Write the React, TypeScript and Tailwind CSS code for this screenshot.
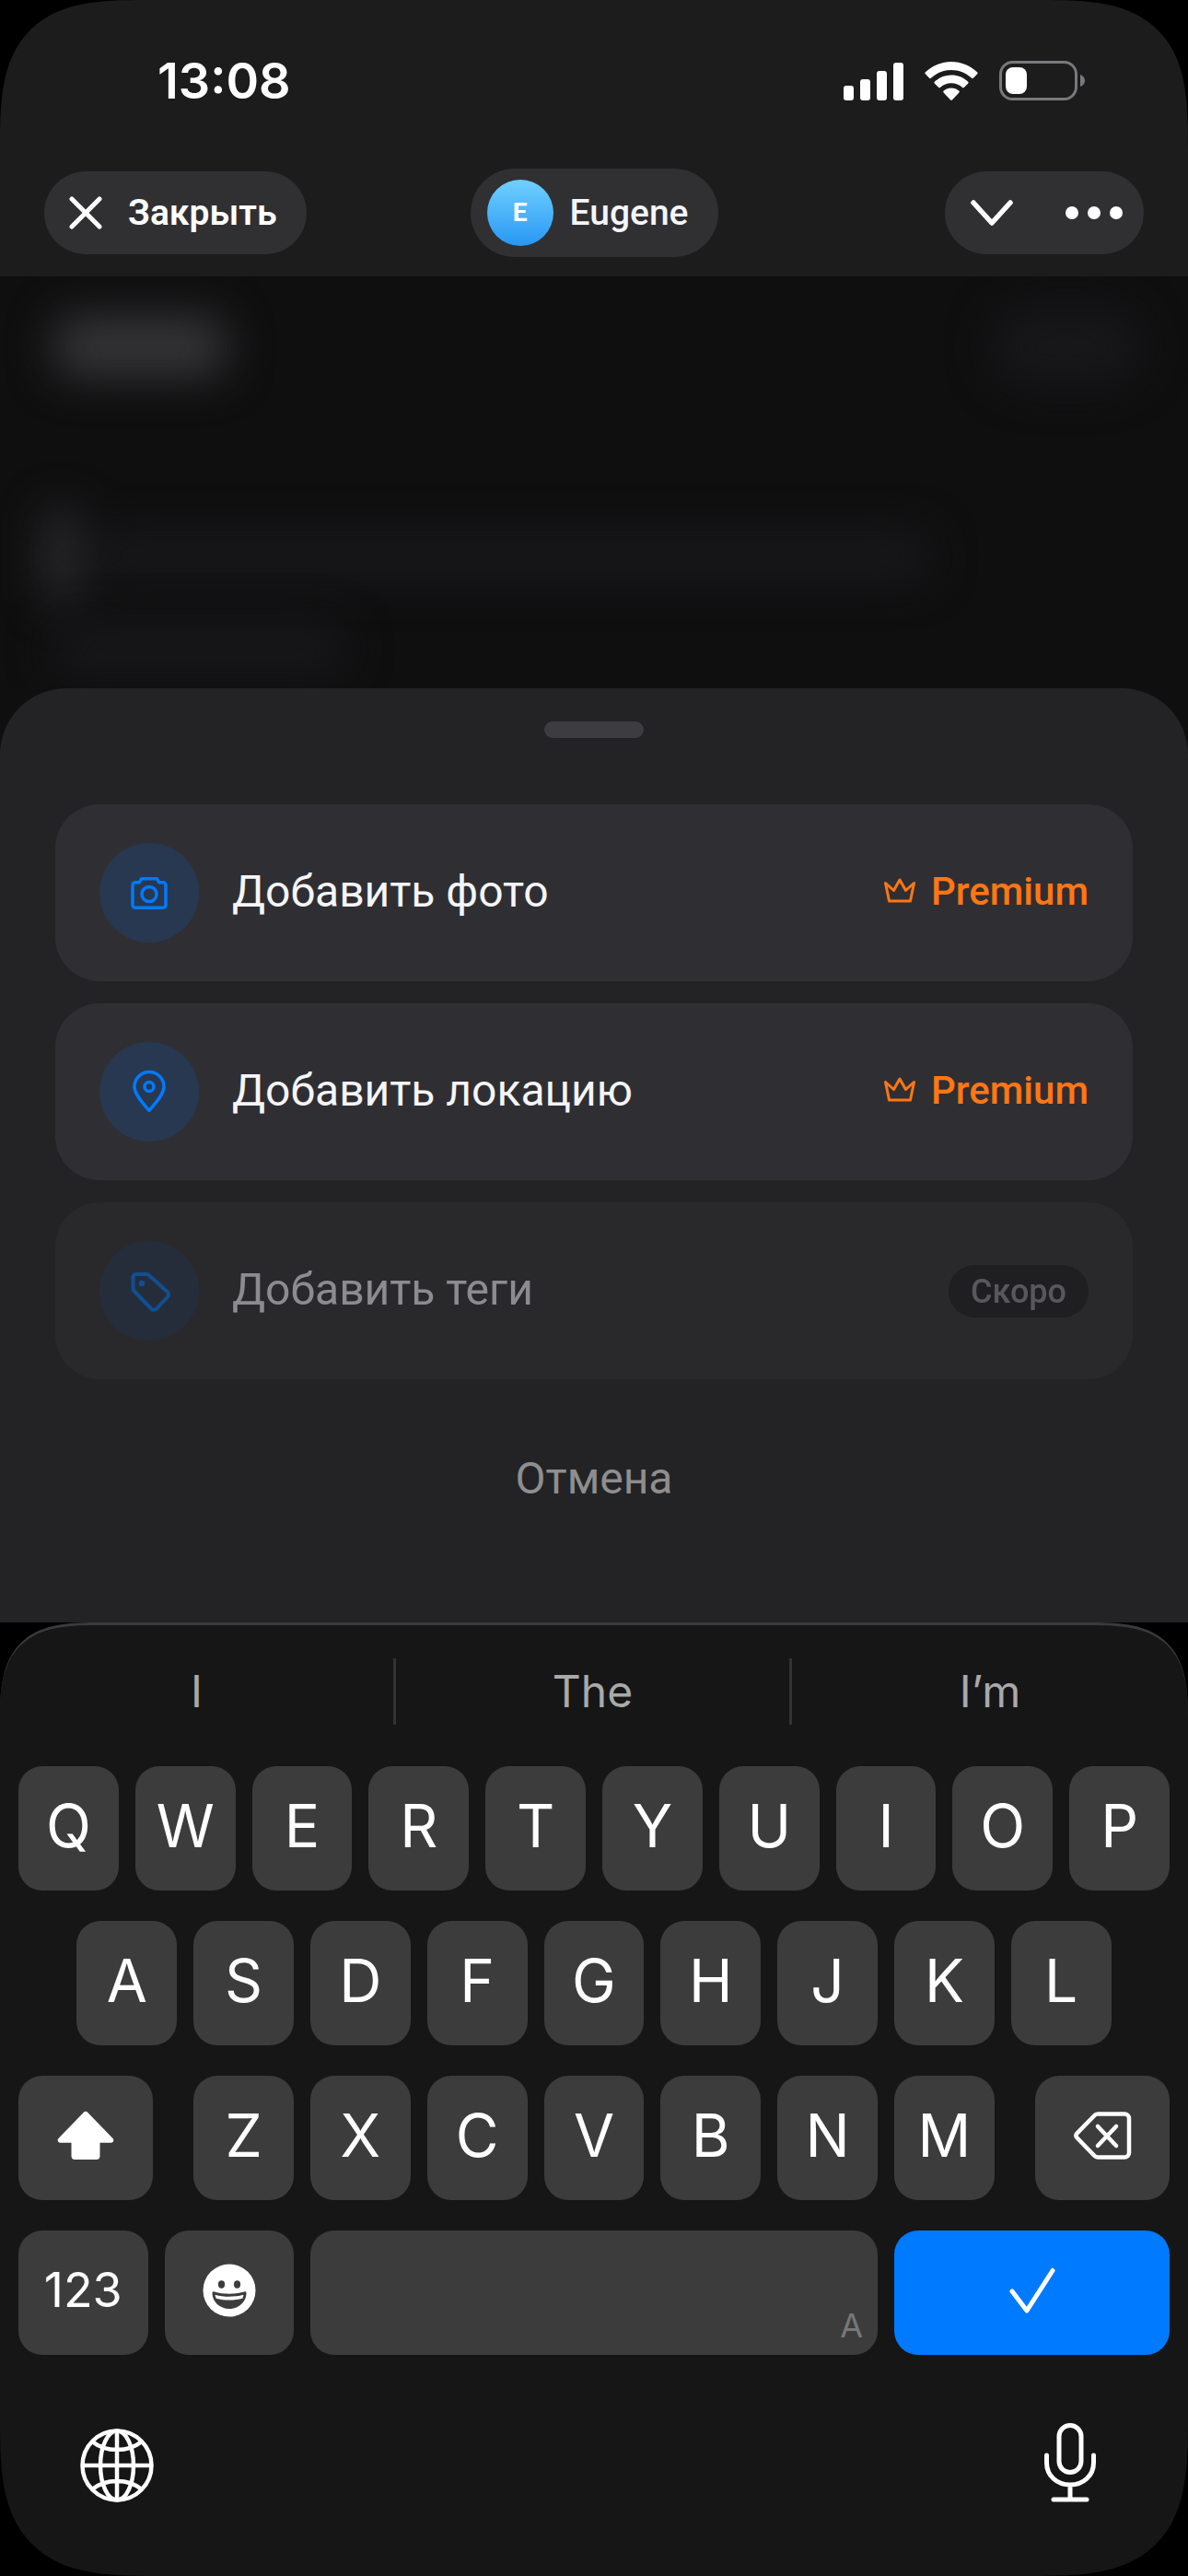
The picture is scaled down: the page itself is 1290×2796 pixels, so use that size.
import type { ReactNode } from 'react';

type IconProps = { className?: string };

const CloseIcon = () => (
  <svg className="w-9 h-9" viewBox="0 0 36 36" fill="none" stroke="white" strokeWidth="5" strokeLinecap="round">
    <path d="M3 3l30 30M33 3L3 33" />
  </svg>
);

const ChevronIcon = () => (
  <svg className="w-12 h-8" viewBox="0 0 48 32" fill="none" stroke="white" strokeWidth="5.500" strokeLinecap="round" strokeLinejoin="round">
    <path d="M4 5l20 22L44 5" />
  </svg>
);

const DotsIcon = () => (
  <svg className="w-16 h-4" viewBox="0 0 64 16" fill="white">
    <circle cx="8" cy="8" r="7" />
    <circle cx="32" cy="8" r="7" />
    <circle cx="56" cy="8" r="7" />
  </svg>
);

const SignalIcon = () => (
  <svg className="w-[65px] h-[42px]" viewBox="0 0 65 42" fill="white">
    <rect x="0" y="26" width="11" height="16" rx="3" />
    <rect x="18" y="19" width="11" height="23" rx="3" />
    <rect x="36" y="10" width="11" height="32" rx="3" />
    <rect x="54" y="1" width="11" height="41" rx="3" />
  </svg>
);

const WifiIcon = () => (
  <svg className="w-[58px] h-[42px]" viewBox="0 0 58 42" fill="white">
    <path d="M29 0C18.300 0 8.500 4.200 1 11.200a1.600 1.600 0 0 0 0 2.400l3.900 4a1.600 1.600 0 0 0 2.300 0A31.500 31.500 0 0 1 29 9c8.400 0 16 3.200 21.800 8.600a1.600 1.600 0 0 0 2.300 0l3.900-4a1.600 1.600 0 0 0 0-2.400C49.500 4.200 39.700 0 29 0z" />
    <path d="M29 14.500c-6.900 0-13.200 2.600-18 7a1.600 1.600 0 0 0 0 2.300l4 4a1.600 1.600 0 0 0 2.200 0A17.300 17.300 0 0 1 29 23.300c4.500 0 8.600 1.700 11.800 4.500a1.600 1.600 0 0 0 2.200 0l4-4a1.600 1.600 0 0 0 0-2.300c-4.800-4.400-11.100-7-18-7z" />
    <path d="M29 28.500c-3.200 0-6 1.100-8.200 3a1.500 1.500 0 0 0 0 2.200l7.100 7.500a1.500 1.500 0 0 0 2.200 0l7.100-7.500a1.500 1.500 0 0 0 0-2.200c-2.200-1.900-5-3-8.200-3z" />
  </svg>
);

const BatteryIcon = () => (
  <svg className="w-[94px] h-[44px]" viewBox="0 0 94 44">
    <rect x="1.500" y="1.500" width="82" height="40" rx="13" fill="none" stroke="#79797b" strokeWidth="3" />
    <path d="M88 15c3 1 5 3.500 5 6.500s-2 5.500-5 6.500z" fill="#79797b" />
    <rect x="7" y="7" width="23" height="29" rx="8" fill="white" />
  </svg>
);

const CameraIcon = () => (
  <svg className="w-12 h-12" viewBox="0 0 48 48" fill="none" stroke="currentColor" strokeWidth="3.500" strokeLinejoin="round">
    <path d="M15.500 8.800h17l2.300 4H39a3 3 0 0 1 3 3v21.500a3 3 0 0 1-3 3H9a3 3 0 0 1-3-3V15.800a3 3 0 0 1 3-3h4.200z" />
    <circle cx="24" cy="25.500" r="8" />
  </svg>
);

const PinIcon = () => (
  <svg className="w-12 h-12" viewBox="0 0 48 48" fill="none" stroke="currentColor" strokeWidth="3.500" strokeLinejoin="round">
    <path d="M24 44.500C17.500 36.500 8 27 8 18.500a16 16 0 0 1 32 0c0 8.500-9.500 18-16 26z" />
    <circle cx="24" cy="18.500" r="5" />
  </svg>
);

const TagIcon = () => (
  <svg className="w-12 h-12" viewBox="0 0 48 48" fill="none" stroke="currentColor" strokeWidth="4" strokeLinejoin="round">
    <path d="M10 6h11a4 4 0 0 1 2.800 1.200l20 18a4 4 0 0 1 0 5.800L32 43.500a4 4 0 0 1-5.800 0L7.800 24.500A4 4 0 0 1 6.500 21.700V9.500A3.500 3.500 0 0 1 10 6z" />
    <circle cx="16" cy="16" r="3.200" fill="currentColor" stroke="none" />
  </svg>
);

const CrownIcon = () => (
  <svg className="w-9 h-9" viewBox="0 0 36 36" fill="none" stroke="currentColor" strokeWidth="3" strokeLinejoin="round">
    <path d="M2.500 9.500l4 19.500h23l4-19.500-9 8L18 6l-6.500 11.500z" />
  </svg>
);

const ShiftIcon = () => (
  <svg className="w-[62px] h-[54px]" viewBox="0 0 62 54" fill="white">
    <path d="M28.400 2.200a3.600 3.600 0 0 1 5.200 0L60.500 30c1.800 2 .5 4.800-2 4.800H46.500V49a4 4 0 0 1-4 4h-23a4 4 0 0 1-4-4V34.800H3.500c-2.500 0-3.800-2.800-2-4.800z" />
  </svg>
);

const BackspaceIcon = () => (
  <svg className="w-16 h-[54px]" viewBox="0 0 64 54" fill="none" stroke="white" strokeWidth="4.500" strokeLinecap="round" strokeLinejoin="round">
    <path d="M27 3.500h29a5 5 0 0 1 5 5v37a5 5 0 0 1-5 5H27a5 5 0 0 1-3.700-1.700L4.400 29.200a3.500 3.500 0 0 1 0-4.600L23.300 5.200A5 5 0 0 1 27 3.500z" />
    <path d="M27 17l20 21M47 17L27 38" />
  </svg>
);

const EmojiIcon = () => (
  <svg className="w-[58px] h-[58px]" viewBox="0 0 58 58">
    <circle cx="29" cy="29" r="28.500" fill="white" />
    <ellipse cx="20.500" cy="22.500" rx="3.600" ry="4.200" fill="#3c3c3c" />
    <ellipse cx="37.500" cy="22.500" rx="3.600" ry="4.200" fill="#3c3c3c" />
    <path d="M10.500 32c0-1.500 1-2 2.200-1.600 10.500 3 22 3 32.600 0 1.200-.4 2.200.1 2.200 1.600C47.500 41 39.500 49 29 49s-18.500-8-18.500-17z" fill="#3c3c3c" />
    <path d="M13.500 33.700c10 2.700 21 2.700 31 0-.2 1.500-.6 2.800-1.200 4-9 2.500-19.600 2.500-28.600 0-.6-1.200-1-2.500-1.200-4z" fill="white" />
  </svg>
);

const CheckIcon = () => (
  <svg className="w-[50px] h-[50px]" viewBox="0 0 50 50" fill="none" stroke="white" strokeWidth="5" strokeLinecap="round" strokeLinejoin="round">
    <path d="M3 26l16 21L47 3.500" />
  </svg>
);

const GlobeIcon = ({ className }: IconProps) => (
  <svg className={className} viewBox="0 0 80 80" fill="none" stroke="white" strokeWidth="4.500">
    <circle cx="40" cy="40" r="37.500" />
    <ellipse cx="40" cy="40" rx="18" ry="37.500" />
    <path d="M40 2.500v75M2.500 40h75M13 14c15 12 39 12 54 0M13 66c15-12 39-12 54 0" />
  </svg>
);

const MicIcon = ({ className }: IconProps) => (
  <svg className={className} viewBox="0 0 58 88" fill="none" stroke="white" strokeWidth="5" strokeLinecap="round">
    <rect x="17" y="3.500" width="24" height="51" rx="12" />
    <path d="M3.500 36v8c0 14 11 24 25.500 24s25.500-10 25.500-24v-8M29 68v15M11 84h36" />
  </svg>
);

const Header = () => {
  return (
    <header className="bg-[#1c1c1d] pt-14 rounded-t-[160px] [corner-shape:superellipse(1.6)]">
      <div className="flex items-center justify-between h-16 pl-[171px] pr-[111px]">
        <time className="text-[54px] leading-16 font-semibold text-white">13:08</time>
        <div className="flex items-center gap-[23px]">
          <SignalIcon />
          <WifiIcon />
          <BatteryIcon />
        </div>
      </div>

      <div className="grid grid-cols-3 items-center pt-[63px] pb-[21px] px-12">
        <button className="flex items-center gap-7 h-[90px] w-[285px] pl-[27px] rounded-full bg-[#303033] text-white text-[39px] font-semibold font-[Roboto,sans-serif]">
          <CloseIcon />
          Закрыть
        </button>
        <button className="justify-self-center flex items-center gap-[18px] h-24 pl-[18px] pr-8 rounded-full bg-[#303033] text-[#f5f5fa] text-[39px] font-medium font-[Roboto,sans-serif]">
          <span className="flex items-center justify-center size-[72px] rounded-full bg-linear-to-b from-[#6fd0ff] to-[#2497f3] text-[28px] font-bold text-white">
            E
          </span>
          Eugene
        </button>
        <div className="justify-self-end flex items-center justify-between w-[216px] h-[90px] pl-[27px] pr-[22px] rounded-full bg-[#303033]">
          <button aria-label="Свернуть">
            <ChevronIcon />
          </button>
          <button aria-label="Меню">
            <DotsIcon />
          </button>
        </div>
      </div>
    </header>
  );
};

// dimmed and blurred screen under the sheet
const Backdrop = () => {
  return (
    <div className="flex-1 min-h-[447px] overflow-hidden pt-9" aria-hidden="true">
      <div className="flex justify-between items-center pl-[60px] pr-[52px] blur-[24px]">
        <div className="w-46 h-16 rounded-2xl bg-[#363638]" />
        <div className="w-40 h-20 rounded-full bg-[#18181a]" />
      </div>
      <div className="flex items-center gap-5 mt-[136px] px-[52px] blur-[24px]">
        <div className="w-7 h-26 rounded-full bg-[#343437]" />
        <div className="w-[910px] h-12 rounded-full bg-[#19191b]" />
      </div>
      <div className="w-80 h-12 mt-6 ml-14 rounded-full bg-[#19191b] blur-[24px]" />
    </div>
  );
};

type ActionProps = {
  icon: ReactNode;
  label: string;
  soon?: boolean;
};

const Action = ({ icon, label, soon }: ActionProps) => {
  return (
    <button
      disabled={soon}
      className="flex items-center gap-9 w-full px-12 py-[42px] rounded-[48px] bg-[#2f2f33] disabled:opacity-50"
    >
      <span className="flex items-center justify-center size-[108px] rounded-full bg-[#273850] text-[#007aff]">
        {icon}
      </span>
      <span className="flex-1 pb-0.5 text-left text-5xl text-[#f5f5fa]">{label}</span>
      {soon ? (
        <span className="px-6 pt-0.5 text-4xl leading-[55px] font-medium text-[#8e8e93] bg-[#1c1c1e] rounded-full">
          Скоро
        </span>
      ) : (
        <span className="flex items-center gap-4 pb-1 text-[42px] font-medium text-[#ff7614]">
          <CrownIcon />
          Premium
        </span>
      )}
    </button>
  );
};

const Sheet = () => {
  return (
    <section className="bg-[#0f0f10] font-[Roboto,sans-serif]">
      <div className="bg-[#232325] rounded-t-[72px] px-[60px] pt-9 pb-24">
        <div className="w-[108px] h-[18px] mx-auto mb-[72px] rounded-full bg-[#3d3d41]" />
        <div className="flex flex-col gap-6">
          <Action icon={<CameraIcon />} label="Добавить фото" />
          <Action icon={<PinIcon />} label="Добавить локацию" />
          <Action icon={<TagIcon />} label="Добавить теги" soon />
        </div>
        <button className="block w-full h-30 mt-12 text-5xl text-[#8e8e90]">Отмена</button>
      </div>
    </section>
  );
};

type KeyProps = {
  children?: ReactNode;
  className?: string;
  label?: string;
};

const Key = ({ children, className = 'col-span-2 text-[64px]', label }: KeyProps) => {
  return (
    <button
      aria-label={label}
      className={`flex items-center justify-center h-[135px] pb-1.5 rounded-[26px] bg-[#3c3c3c] text-white ${className}`}
    >
      {children}
    </button>
  );
};

const letters = (row: string) => row.split('').map((l) => <Key key={l}>{l}</Key>);

const Keyboard = () => {
  return (
    <section className="bg-[#161616] rounded-t-[110px] rounded-b-[170px] [corner-shape:superellipse(1.6)] border-t-3 border-[#3a3a3a] pt-9 pb-20">
      <div className="grid grid-cols-3 divide-x-3 divide-[#333333] h-18 text-5xl text-[#a9a9a9]">
        <button>I</button>
        <button>The</button>
        <button>I’m</button>
      </div>

      <div className="grid grid-cols-20 gap-x-[18px] gap-y-[33px] px-5 pt-[45px]">
        {letters('QWERTYUIOP')}
        <div />
        {letters('ASDFGHJKL')}
        <div />
        <Key className="col-span-3 mr-[26px]" label="Shift">
          <ShiftIcon />
        </Key>
        {letters('ZXCVBNM')}
        <Key className="col-span-3 ml-[26px]" label="Удалить">
          <BackspaceIcon />
        </Key>
        <div className="col-span-5 grid grid-cols-2 gap-[18px]">
          <Key className="text-[52px]">123</Key>
          <Key className="" label="Эмодзи">
            <EmojiIcon />
          </Key>
        </div>
        <button className="col-span-10 flex items-end justify-end px-4 pb-2.5 rounded-[26px] bg-[#3c3c3c] text-[36px] leading-11 text-[#777777]">
          A
        </button>
        <button aria-label="Готово" className="col-span-5 flex items-center justify-center pb-1.5 rounded-[26px] bg-[#007aff]">
          <CheckIcon />
        </button>
      </div>

      <div className="flex items-center justify-between h-20 mt-20 pl-[87px] pr-[99px]">
        <button aria-label="Язык">
          <GlobeIcon className="w-20 h-20" />
        </button>
        <button aria-label="Диктовка" className="pb-1.5">
          <MicIcon className="w-[58px] h-[88px]" />
        </button>
      </div>
    </section>
  );
};

const App = () => {
  return (
    <div className="min-h-screen bg-black font-[Inter,sans-serif]">
      <div className="flex flex-col min-h-screen">
        <Header />
        <div className="flex flex-col flex-1 bg-[#0f0f10]">
          <Backdrop />
          <Sheet />
        </div>
        <Keyboard />
      </div>
    </div>
  );
};

export default App;
